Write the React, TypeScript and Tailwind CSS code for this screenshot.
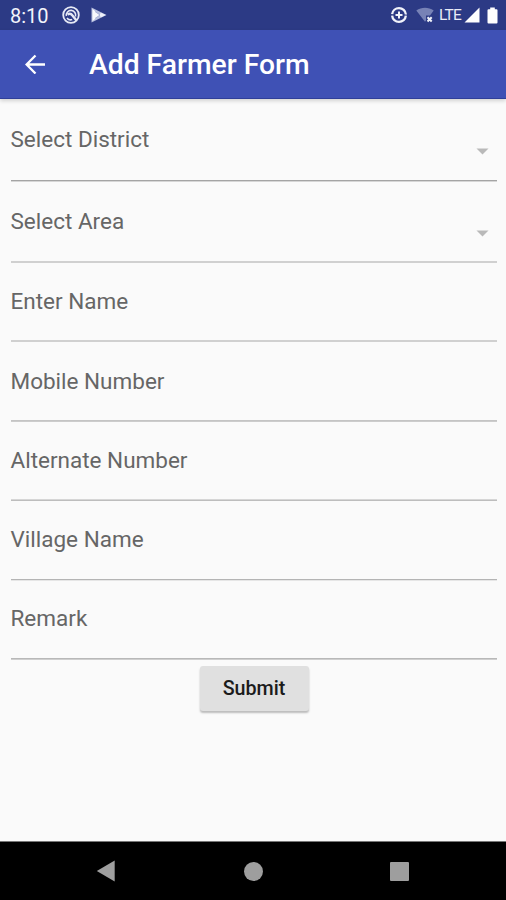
import { useState } from "react";
import clsx from "clsx";

type Field = {
  id: string;
  label: string;
  select?: boolean;
  rowClass: string;
  lineClass: string;
};

const FIELDS: Field[] = [
  { id: "district", label: "Select District", select: true, rowClass: "h-[83px] pt-[26px]", lineClass: "border-[#a4a4a4] bg-[#d6d6d6]" },
  { id: "area", label: "Select Area", select: true, rowClass: "h-[81px] pt-[25px]", lineClass: "border-[#d0d0d0] bg-[#d0d0d0]" },
  { id: "name", label: "Enter Name", rowClass: "h-[79px] pt-[24px]", lineClass: "border-[#d0d0d0] bg-[#d0d0d0]" },
  { id: "mobile", label: "Mobile Number", rowClass: "h-[80px] pt-[25px]", lineClass: "border-[#c4c4c4] bg-[#cccccc]" },
  { id: "alternate", label: "Alternate Number", rowClass: "h-[79px] pt-[24px]", lineClass: "border-[#d6d6d6] bg-[#bdbdbd]" },
  { id: "village", label: "Village Name", rowClass: "h-[80px] pt-[24px]", lineClass: "border-[#b4b4b4] bg-[#e6e6e6]" },
  { id: "remark", label: "Remark", rowClass: "h-[79px] pt-[23px]", lineClass: "border-[#b8b8b8] bg-[#cfcfcf]" },
];

function StatusBar() {
  return (
    <div className="flex h-[30px] items-center justify-between bg-[#2c3a85] pl-[10px] pr-[8px] text-white">
      <div className="flex items-center">
        <span className="w-[52px] pt-[2px] text-[20px] leading-[30px] text-[#f2f4fb]">8:10</span>
        <svg width="18" height="18" viewBox="0 0 18 18" fill="none" stroke="#e6e9f5">
          <circle cx="9" cy="9" r="7.8" strokeWidth="1.8" />
          <path d="M4.4 10A4.7 4.7 0 1 1 13.5 10.5M5 12a4.6 4.6 0 0 0 5.200 1.5" strokeWidth="1.6" />
          <path d="M5.5 8.5Q8.5 6.5 10.5 9.5L14.5 14.5" strokeWidth="2.4" />
        </svg>
        <svg className="ml-[11px]" width="16" height="18" viewBox="0 0 16 18">
          <path d="M.5 1.5L15.500 9L.5 16.5z" fill="#b9c0df" />
          <path d="M1.5 3L9 9L1.5 15z" fill="#f8f9fd" />
          <path d="M10 6.7L14.8 9L10 11.3L8.2 9z" fill="#eef0fa" />
          <path d="M4 5.500L9 9L4 12.500" fill="none" stroke="#8d98c8" strokeWidth=".7" />
        </svg>
      </div>
      <div className="flex items-center">
        <svg width="18" height="18" viewBox="0 0 18 18" fill="none" stroke="#f1f3fa">
          <circle cx="9" cy="9" r="6.9" strokeWidth="2.3" strokeDasharray="20.2 1.477" strokeDashoffset="-.7" />
          <path d="M9 5.5v7M5.5 9h7" strokeWidth="2" />
        </svg>
        <svg className="ml-[8px]" width="18" height="18" viewBox="0 0 18 18">
          <path d="M.3 4.5C5.5.7 12.5.7 17.7 4.5L14 9.5H10V14.5L9 15.8z" fill="#7782b6" />
          <path d="M11.5 11.3l4.200 4.200m0-4.200l-4.200 4.200" stroke="#f1f3fa" strokeWidth="2" />
        </svg>
        <span className="ml-[5px] w-[23px] whitespace-nowrap text-[15.5px] leading-[30px] tracking-[-0.8px] text-[#e9ebf6]">LTE</span>
        <svg className="ml-[2px]" width="16" height="16" viewBox="0 0 16 16">
          <path d="M15.5 .5V15.5H.5z" fill="#fff" />
        </svg>
        <svg className="ml-[7px]" width="11" height="17" viewBox="0 0 11 17">
          <path d="M3.2 .5h4.600v1.700H9.500a1 1 0 0 1 1 1V15.500a1 1 0 0 1-1 1h-8a1 1 0 0 1-1-1V3.200a1 1 0 0 1 1-1H3.200z" fill="#fff" />
        </svg>
      </div>
    </div>
  );
}

function AppBar() {
  return (
    <header className="relative z-10 flex h-[69px] items-center border-b border-[#2f3f99] bg-[#3f51b5] pl-[25px] shadow-[0_2px_4px_rgba(0,0,0,0.16)]">
      <button type="button" aria-label="Back">
        <svg width="20" height="20" viewBox="0 0 20 20" fill="none" stroke="#fff" strokeWidth="2.3">
          <path d="M20 10.500H2M10.5 1.500L1.6 10.500l8.900 9" />
        </svg>
      </button>
      <h1 className="ml-[44px] pt-px text-[28.25px] font-medium leading-[34px] text-white">Add Farmer Form</h1>
    </header>
  );
}

function FormRow({ field, active, onSelect }: { field: Field; active: boolean; onSelect: () => void }) {
  return (
    <div className={clsx("flex flex-col justify-between", field.rowClass)} onClick={onSelect} data-active={active}>
      <div className="flex justify-between">
        <span className="text-[22.5px] leading-[28px] text-[#666]">{field.label}</span>
        {field.select && (
          <svg className="mr-[8px] mt-[23px]" width="13" height="7" viewBox="0 0 13 7">
            <path d="M.5 .5h12L6.5 6.5z" fill="#b9b9b9" />
          </svg>
        )}
      </div>
      <div className={clsx("h-[2px] border-t", field.lineClass)} />
    </div>
  );
}

function NavBar() {
  return (
    <nav className="flex h-[59px] items-center border-t border-[#777] bg-black pl-[96px]">
      <svg width="20" height="22" viewBox="0 0 20 22">
        <path d="M18.7 .5V21.5L.8 11z" fill="#9e9e9e" />
      </svg>
      <div className="ml-[128px] size-[19px] rounded-full bg-[#9e9e9e]" />
      <div className="ml-[127px] size-[19px] rounded-[1px] bg-[#9e9e9e]" />
    </nav>
  );
}

export default function App() {
  const [active, setActive] = useState<string | null>(null);

  return (
    <div className="flex h-[900px] w-[506px] flex-col overflow-hidden bg-[#fafafa] font-[Roboto,'Liberation_Sans',sans-serif]">
      <StatusBar />
      <AppBar />
      <main className="flex-1 pl-[10.5px] pr-[9.5px]">
        {FIELDS.map((field) => (
          <FormRow
            key={field.id}
            field={field}
            active={active === field.id}
            onSelect={() => setActive(field.id)}
          />
        ))}
        <button
          type="button"
          className="ml-[189px] mt-[6px] block h-[45px] w-[109px] rounded-[3px] bg-[#e0e0e0] text-[19.7px] font-medium text-[#1b1b1b] shadow-[0_2px_2px_rgba(0,0,0,0.25)]"
        >
          Submit
        </button>
      </main>
      <NavBar />
    </div>
  );
}
